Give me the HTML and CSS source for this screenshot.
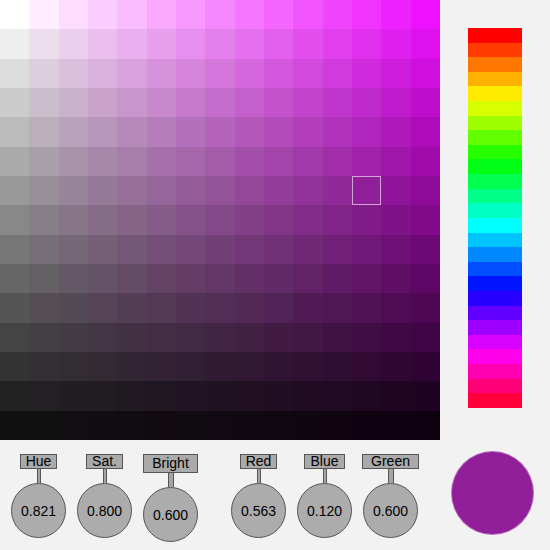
FILE: index.html
```html
<!DOCTYPE html>
<html lang="en">
<head>
  <meta charset="UTF-8">
  <title>HSB Color Picker</title>
  <link rel="stylesheet" href="styles.css">
</head>
<body>
  <div class="app">
    <div id="board" class="board"></div>

    <div class="hue-panel">
      <div id="hueBar" class="hue-bar"></div>
    </div>

    <div class="controls">
      <div class="group">
        <div class="knob">
          <div class="tag">Hue</div>
          <div class="stem"></div>
          <div class="dial">0.821</div>
        </div>
        <div class="knob">
          <div class="tag">Sat.</div>
          <div class="stem"></div>
          <div class="dial">0.800</div>
        </div>
        <div class="knob">
          <div class="tag tall wide">Bright</div>
          <div class="stem thick"></div>
          <div class="dial">0.600</div>
        </div>
      </div>
      <div class="group">
        <div class="knob">
          <div class="tag">Red</div>
          <div class="stem"></div>
          <div class="dial">0.563</div>
        </div>
        <div class="knob">
          <div class="tag">Blue</div>
          <div class="stem"></div>
          <div class="dial">0.120</div>
        </div>
        <div class="knob">
          <div class="tag wide">Green</div>
          <div class="stem thick"></div>
          <div class="dial">0.600</div>
        </div>
      </div>
    </div>

    <div class="swatch-panel">
      <div class="swatch"></div>
    </div>
  </div>

  <script>
    const board = document.getElementById('board');
    const hueBar = document.getElementById('hueBar');
    const HUE = 0.821;
    const STEPS = 15;
    const BANDS = 26;

    function hsb(h, s, v) {
      const i = Math.floor(h * 6) % 6;
      const f = h * 6 - Math.floor(h * 6);
      const p = v * (1 - s);
      const q = v * (1 - f * s);
      const t = v * (1 - (1 - f) * s);
      const rgb = [
        [v, t, p], [q, v, p], [p, v, t],
        [p, q, v], [t, p, v], [v, p, q]
      ][i];
      return 'rgb(' + rgb.map(c => Math.round(c * 255)).join(',') + ')';
    }

    for (let row = 0; row < STEPS; row++) {
      for (let col = 0; col < STEPS; col++) {
        const cell = document.createElement('div');
        cell.className = 'cell';
        if (row === 6 && col === 12) cell.classList.add('selected');
        cell.style.background = hsb(HUE, col / STEPS, (STEPS - row) / STEPS);
        board.appendChild(cell);
      }
    }

    for (let b = 0; b < BANDS; b++) {
      const band = document.createElement('div');
      band.className = 'band';
      band.style.background = hsb(b / BANDS, 1, 1);
      hueBar.appendChild(band);
    }
  </script>
</body>
</html>
```

FILE: styles.css
```css
body {
  margin: 0;
  background: #f2f2f2;
  font-family: "Liberation Sans", Arial, Helvetica, sans-serif;
  color: #000;
}
.app {
  display: grid;
  grid-template-columns: 440px 110px;
  grid-template-rows: 440px 110px;
  width: 550px;
  height: 550px;
}
.board {
  display: grid;
  grid-template-columns: repeat(15, 1fr);
  grid-template-rows: repeat(15, 1fr);
}
.cell.selected {
  box-shadow: inset 0 0 0 1px rgba(255, 255, 255, 0.6);
}
.hue-panel {
  padding: 28px 0 0 28px;
}
.hue-bar {
  display: flex;
  flex-direction: column;
  width: 54px;
  height: 380px;
}
.band { flex: 1; }

.controls {
  display: flex;
  gap: 33px;
  padding: 14px 0 0 11px;
}
.group {
  display: flex;
  gap: 11px;
}
.knob {
  display: flex;
  flex-direction: column;
  align-items: center;
  width: 55px;
}
.tag {
  box-sizing: border-box;
  height: 15px;
  padding: 0 5px;
  background: #aaa;
  border: 1px solid #555;
  font-size: 14px;
  line-height: 13px;
  white-space: nowrap;
}
.tag.wide { padding: 0 8px; }
.tag.tall {
  height: 19px;
  line-height: 17px;
}
.stem {
  box-sizing: border-box;
  width: 4px;
  height: 14px;
  background: #a4a4a4;
  border-left: 1px solid #555;
  border-right: 1px solid #555;
}
.stem.thick { width: 6px; }
.dial {
  box-sizing: border-box;
  display: flex;
  align-items: center;
  justify-content: center;
  width: 55px;
  height: 55px;
  border-radius: 50%;
  background: #acacac;
  border: 1px solid #555;
  font-size: 14px;
}

.swatch-panel {
  padding: 11px 0 0 11px;
}
.swatch {
  box-sizing: border-box;
  width: 83px;
  height: 84px;
  border-radius: 50%;
  background: #901f99;
  border: 1px solid rgba(255, 255, 255, 0.35);
}
```
